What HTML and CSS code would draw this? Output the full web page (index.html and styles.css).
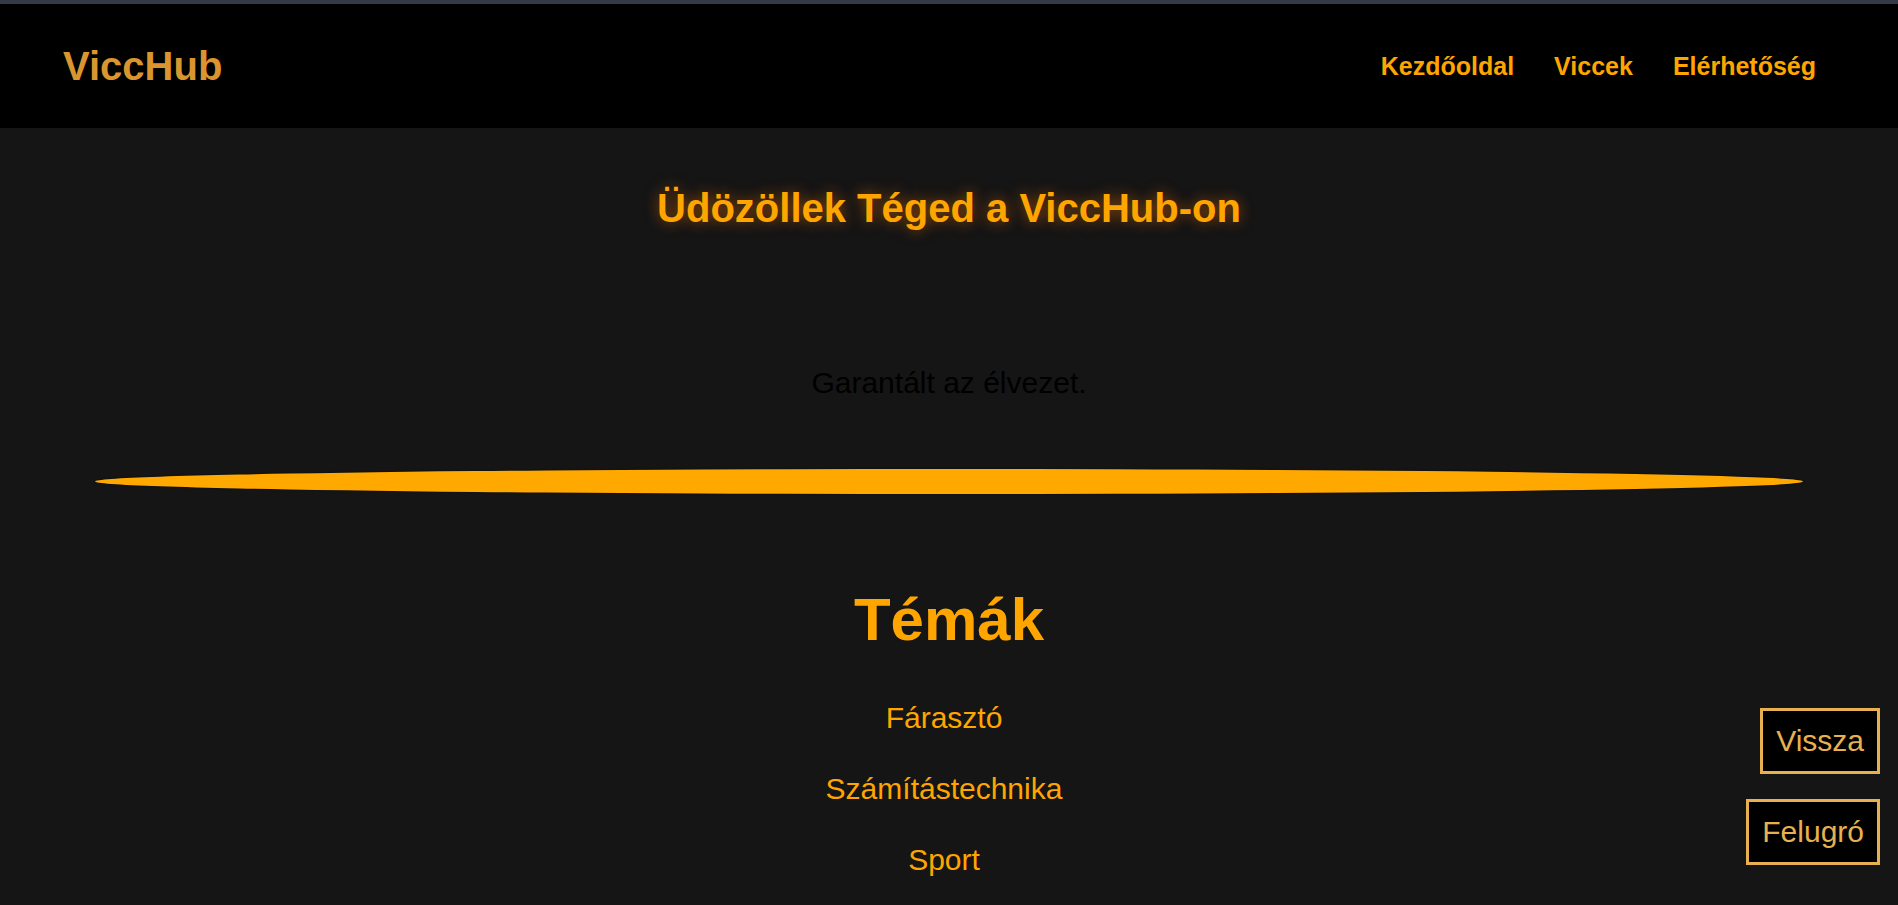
FILE: index.html
```html
<!DOCTYPE html>
<html lang="hu">
<head>
<meta charset="utf-8">
<title>ViccHub</title>
<link rel="stylesheet" href="styles.css">
</head>
<body>
<header class="site-header">
  <a class="logo" href="#">ViccHub</a>
  <nav class="nav">
    <a href="#">Kezdőoldal</a>
    <a href="#">Viccek</a>
    <a href="#">Elérhetőség</a>
  </nav>
</header>
<main class="main">
  <h2 class="welcome">Üdözöllek Téged a ViccHub-on</h2>
  <p class="tagline">Garantált az élvezet.</p>
  <hr class="divider">
  <h1 class="topics-title">Témák</h1>
  <ul class="topics">
    <li><a href="#">Fárasztó</a></li>
    <li><a href="#">Számítástechnika</a></li>
    <li><a href="#">Sport</a></li>
  </ul>
</main>
<div class="floating">
  <button class="float-btn">Vissza</button>
  <button class="float-btn">Felugró</button>
</div>
</body>
</html>
```
FILE: styles.css
```css
html, body {
  margin: 0;
  padding: 0;
}
body {
  background: #151515;
  font-family: "Liberation Sans", Arial, sans-serif;
  border-top: 4px solid #333946;
  min-height: 901px;
  overflow: hidden;
}
a {
  text-decoration: none;
}
.site-header {
  height: 124px;
  background: #000;
  display: flex;
  align-items: center;
  justify-content: space-between;
  padding: 0 82px 0 63px;
}
.logo {
  color: #da952f;
  font-size: 40px;
  font-weight: bold;
}
.nav {
  display: flex;
  gap: 40px;
}
.nav a {
  color: #ffa500;
  font-size: 25px;
  font-weight: bold;
}
.main {
  display: flex;
  flex-direction: column;
  align-items: center;
}
.welcome {
  margin: 57px 0 0;
  font-size: 40px;
  line-height: 46px;
  color: #ffa500;
  text-shadow: 0 0 14px rgba(255, 120, 0, 0.55);
}
.tagline {
  margin: 135px 0 0;
  font-size: 30px;
  line-height: 34px;
  color: #000;
}
.divider {
  width: 90%;
  height: 25px;
  margin: 69px 0 0;
  border: 0;
  border-radius: 50%;
  background: #ffa800;
  box-shadow: 0 0 2px rgba(0, 0, 0, 0.7);
}
.topics-title {
  margin: 91px 0 0;
  font-size: 60px;
  line-height: 69px;
  color: #ffa500;
}
.topics {
  list-style: none;
  margin: 46px 10px 0 0;
  padding: 0;
  display: flex;
  flex-direction: column;
  align-items: center;
  gap: 36px;
}
.topics a {
  color: #ffa500;
  font-size: 30px;
  line-height: 35px;
}
.floating {
  position: fixed;
  right: 18px;
  bottom: 40px;
  display: flex;
  flex-direction: column;
  align-items: flex-end;
  gap: 25px;
}
.float-btn {
  background: #000;
  color: #e8b04f;
  border: 3px solid #e8b04f;
  font-family: "Liberation Sans", Arial, sans-serif;
  font-size: 30px;
  line-height: 34px;
  padding: 13px 13px;
  margin: 0;
}
```
